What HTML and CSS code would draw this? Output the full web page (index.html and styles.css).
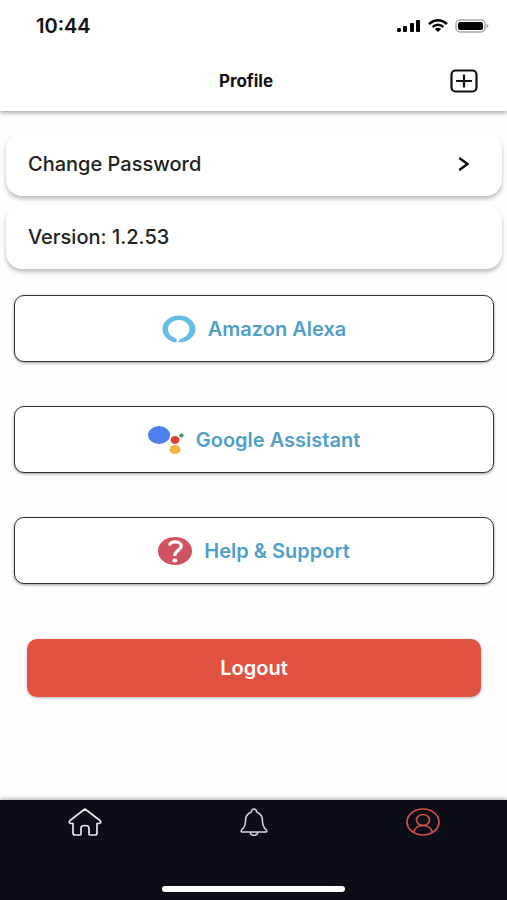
FILE: index.html
```html
<!DOCTYPE html>
<html lang="en">
<head>
	<meta charset="utf-8">
	<meta name="viewport" content="width=device-width, initial-scale=1.0">
	<title>Profile</title>
	<link rel="stylesheet" href="styles.css">
</head>
<body>
	<header class="header">
		<div class="status">
			<span class="time">10:44</span>
			<div class="status-icons">
				<svg width="24" height="14" viewBox="0 0 24 14">
					<rect x="0" y="9" width="4" height="4" rx="1.500"/>
					<rect x="6" y="7" width="4" height="6" rx="1"/>
					<rect x="13" y="4" width="4" height="9" rx="1"/>
					<rect x="19" y="1" width="4" height="12" rx="1"/>
				</svg>
				<svg width="20" height="14" viewBox="0 0 20 14">
					<path d="M1 5Q10-2.400 19 5M4.500 8Q10 3.600 15.500 8" fill="none" stroke="#000" stroke-width="2.400"/>
					<path d="M6.800 10Q10 7.600 13.200 10L10 13z"/>
				</svg>
				<svg width="34" height="14" viewBox="0 0 34 14">
					<rect x="1" y="1" width="29" height="12" rx="4" fill="#fff" stroke="#aaa" stroke-width="1.500"/>
					<rect x="3" y="3" width="25" height="8" rx="2"/>
					<path d="M31.500 5q2 .5 2 2t-2 2z" fill="#aaa"/>
				</svg>
			</div>
		</div>
		<div class="title-bar">
			<h1>Profile</h1>
			<button class="add" aria-label="Add">
				<svg width="28" height="24" viewBox="0 0 28 24" fill="none" stroke="#111" stroke-width="2.200">
					<rect x="1.500" y="1.500" width="25" height="21" rx="4"/>
					<path d="M6 12h16M14 5.500v13"/>
				</svg>
			</button>
		</div>
	</header>

	<main class="content">
		<div class="cards">
			<a class="card" href="#">
				<span>Change Password</span>
				<svg width="12" height="14" viewBox="0 0 12 14" fill="none" stroke="#111" stroke-width="2.400">
					<path d="M2 1.500L9.500 7L2 12.500" stroke-linecap="round"/>
				</svg>
			</a>
			<div class="card">Version: 1.2.53</div>
		</div>

		<div class="links">
			<button class="link">
				<svg width="34" height="28" viewBox="0 0 34 28">
					<path fill="#63bde7" d="M14.300 27.600C6.500 26.600 .5 21 .5 14C.5 6.500 8 .5 17 .5S33.500 6.500 33.500 14C33.500 21.500 26.500 27.300 16 27.600C16.500 26 17.800 24.500 19.800 23.500C24.500 21.500 27.500 18 27.500 14C27.500 9 23 5 17 5S6 9 6 14C6 18.300 8.600 21.300 13.300 23C15 23.800 15.200 25.800 14.300 27.600z"/>
				</svg>
				Amazon Alexa
			</button>
			<button class="link">
				<svg width="36" height="28" viewBox="0 0 36 28">
					<ellipse cx="11" cy="9" rx="11" ry="9" fill="#4d80ed"/>
					<ellipse cx="27" cy="14" rx="4.500" ry="4" fill="#d84437"/>
					<ellipse cx="27" cy="23.500" rx="5.500" ry="4.500" fill="#f0b63f"/>
					<ellipse cx="33.500" cy="9.500" rx="2.200" ry="2" fill="#3d9f57"/>
				</svg>
				Google Assistant
			</button>
			<button class="link">
				<svg width="34" height="28" viewBox="0 0 34 28">
					<ellipse cx="17" cy="14" rx="17" ry="14" fill="#cf5361"/>
					<path d="M11.500 8.500C12 3.500 23.500 3.500 23.200 9.200C23 13.200 16.800 13 16.800 19" fill="none" stroke="#fff" stroke-width="3.200"/>
					<ellipse cx="16.800" cy="23.500" rx="2.500" ry="2" fill="#fff"/>
				</svg>
				Help &amp; Support
			</button>
		</div>

		<button class="logout">Logout</button>
	</main>

	<nav class="tabs">
		<div class="tab-row">
			<a href="#" aria-label="Home">
				<svg width="34" height="28" viewBox="0 0 34 28" fill="none" stroke="#e6e7ec" stroke-width="1.700" stroke-linejoin="round">
					<path d="M17 1L32 12.500Q34 15 31 15.500H29V25Q29 27 27 27H22Q21 27 21 26V20Q21 17.500 17 17.500T13 20V26Q13 27 12 27H7Q5 27 5 25V15.500H3Q0 15 2 12.500z"/>
				</svg>
			</a>
			<a href="#" aria-label="Notifications">
				<svg width="34" height="28" viewBox="0 0 34 28" fill="none" stroke="#d5d7dd" stroke-width="1.500" stroke-linejoin="round">
					<path d="M14.500 4C10 5.500 8.500 8 8.500 13C8.500 18 7 20 4.500 22Q3.500 24 5 24H29Q30.500 24 29.500 22C27 20 25.500 18 25.500 13C25.500 8 24 5.500 19.500 4"/>
					<path d="M14.500 4.200C14 0 20 0 19.500 4.200M13 24C14 28.500 20 28.500 21 24"/>
				</svg>
			</a>
			<a href="#" aria-label="Profile" aria-current="page">
				<svg width="34" height="28" viewBox="0 0 34 28" fill="none" stroke="#d3504b" stroke-width="1.700">
					<ellipse cx="17" cy="14" rx="16" ry="13"/>
					<ellipse cx="17" cy="12" rx="6.500" ry="5.500"/>
					<path d="M7.500 24.500C9 19 13 17.500 17 17.500S25 19 26.500 24.500"/>
				</svg>
			</a>
		</div>
		<div class="home-bar"></div>
	</nav>
</body>
</html>
```
FILE: styles.css
```css
* {
	box-sizing: border-box;
}
body {
	display: flex;
	flex-direction: column;
	min-height: 100vh;
	margin: 0;
	background: #fefefe;
	color: #222;
	font-family: Inter, "Liberation Sans", sans-serif;
}
button {
	border: 0;
	font-family: inherit;
	cursor: pointer;
}
a {
	color: inherit;
	text-decoration: none;
}
svg {
	display: block;
}

.header {
	background: #fff;
	box-shadow: 0 2px 4px rgba(0, 0, 0, .35);
}
.status {
	display: flex;
	align-items: center;
	justify-content: space-between;
	height: 52px;
	padding: 0 18px 0 36px;
}
.time {
	color: #111;
	font-size: 20px;
	font-weight: 600;
}
.status-icons {
	display: flex;
	gap: 7px;
}
.title-bar {
	display: grid;
	grid-template-columns: 1fr auto 1fr;
	align-items: center;
	height: 59px;
	padding: 0 29px 2px 14px;
}
.title-bar h1 {
	grid-column: 2;
	margin: 0;
	color: #111;
	font-size: 17px;
	font-weight: 700;
}
.add {
	justify-self: end;
	padding: 0;
	background: none;
}

.content {
	flex: 1;
	padding: 21px 5px 32px 6px;
}
.cards {
	display: grid;
	gap: 9px;
}
.card {
	display: flex;
	align-items: center;
	justify-content: space-between;
	height: 64px;
	padding: 0 32px 0 22px;
	border-radius: 16px;
	background: #fff;
	box-shadow: 0 3px 4px rgba(0, 0, 0, .26);
	font-size: 20px;
	font-weight: 500;
}
.links {
	display: grid;
	gap: 44px;
	margin: 26px 8px 55px;
}
.link {
	display: flex;
	align-items: center;
	justify-content: center;
	gap: 12px;
	height: 67px;
	border: 1px solid #333;
	border-radius: 10px;
	background: #fff;
	box-shadow: 0 1px 3px rgba(0, 0, 0, .4);
	color: #4f9fc8;
	font-size: 20px;
	font-weight: 600;
}
.logout {
	display: block;
	width: calc(100% - 42px);
	height: 58px;
	margin: 0 auto;
	border-radius: 10px;
	background: #e15241;
	box-shadow: 0 1px 3px rgba(0, 0, 0, .3);
	color: #fff;
	font-size: 20px;
	font-weight: 600;
}

.tabs {
	display: flex;
	flex-direction: column;
	align-items: center;
	justify-content: space-between;
	height: 100px;
	padding: 8px 0;
	background: #0b0e17;
	box-shadow: 0 -1px 4px rgba(0, 0, 0, .35);
}
.tab-row {
	display: grid;
	grid-template-columns: repeat(3, 1fr);
	justify-items: center;
	width: 100%;
}
.home-bar {
	width: 36%;
	height: 6px;
	border-radius: 3px;
	background: #fff;
}
```
